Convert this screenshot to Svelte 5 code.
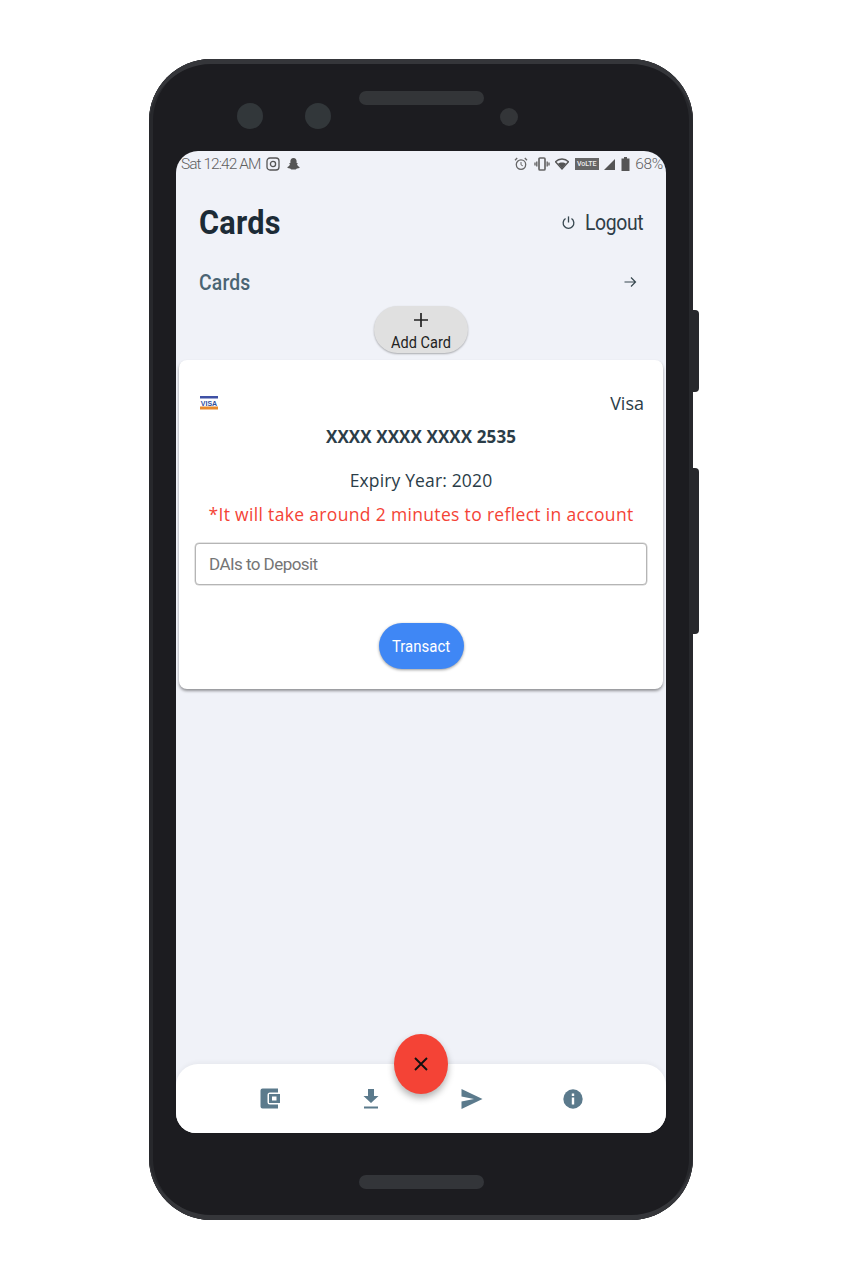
<script>
  const navItems = ['wallet', 'download', 'send', 'info'];
</script>

<div class="page">
  <div class="phone">
    <div class="rocker"></div>
    <div class="power"></div>
    <div class="bezel-top">
      <span class="cam cam-a"></span>
      <span class="cam cam-b"></span>
      <span class="speaker"></span>
      <span class="sensor"></span>
    </div>

    <div class="screen">
      <div class="status">
        <div class="status-left">
          <span>Sat 12:42 AM</span>
          <svg width="14" height="14" viewBox="0 0 14 14"><rect x="1" y="1" width="12" height="12" rx="3" fill="none" stroke="#555" stroke-width="1.300"/><circle cx="7" cy="7" r="2.600" fill="none" stroke="#555" stroke-width="1.300"/></svg>
          <svg width="15" height="14" viewBox="0 0 15 14"><path d="M7.500 1C5.400 1 4.400 2.600 4.400 4.300V6L3 6.600l1 .8C3.600 8.600 2.600 9.600 1 10.200l1.500 1 1.600.2 1.200 1.100h4.400l1.200-1.100 1.600-.2 1.500-1c-1.600-.6-2.600-1.600-3-2.800l1-.8L10.600 6V4.300C10.600 2.600 9.600 1 7.500 1z" fill="#555"/></svg>
        </div>
        <div class="status-right">
          <svg width="14" height="14" viewBox="0 0 14 14"><circle cx="7" cy="7.600" r="4.700" fill="none" stroke="#666" stroke-width="1.300"/><path d="M7 5v2.800l1.800 1" fill="none" stroke="#666"/><path d="M1 3.200 3.200 1M13 3.200 10.800 1" stroke="#666" stroke-width="1.300"/></svg>
          <svg width="16" height="14" viewBox="0 0 16 14"><rect x="5" y="1" width="6" height="12" rx="1" fill="none" stroke="#666" stroke-width="1.700"/><path d="M2.800 4.500v5M1 5.500v3M13.200 4.500v5M15 5.500v3" stroke="#666" stroke-width="1.400"/></svg>
          <svg width="14" height="12" viewBox="0 0 14 12"><path d="M7 11 .5 3.800C2.200 2 4.500 1 7 1s4.800 1 6.500 2.800z" fill="none" stroke="#555" stroke-width="1.300"/><path d="M7 10.500 3 5.800C4 5 5.400 4.500 7 4.500s3 .5 4 1.300z" fill="#555"/></svg>
          <span class="volte">VoLTE</span>
          <svg width="11" height="11" viewBox="0 0 12 12"><path d="M0 12 12 0v12z" fill="#555"/></svg>
          <svg width="9" height="14" viewBox="0 0 9 14"><path d="M3 0h3v1.500h2.500V14H.5V1.500H3z" fill="#555"/></svg>
          <span>68%</span>
        </div>
      </div>

      <header class="app-header">
        <h1>Cards</h1>
        <button class="logout">
          <svg width="15" height="15" viewBox="0 0 16 16"><path d="M8 1.500v6.500" stroke="#37474f" stroke-width="1.400" fill="none"/><path d="M4.800 3.800a5.700 5.700 0 1 0 6.400 0" stroke="#37474f" stroke-width="1.400" fill="none"/></svg>
          <span class="narrow-right">Logout</span>
        </button>
      </header>

      <div class="section-row">
        <span class="section-title">Cards</span>
        <svg width="14" height="14" viewBox="0 0 14 14"><path d="M1.500 7h11M8 2.500 12.500 7 8 11.500" fill="none" stroke="#37474f" stroke-width="1.200"/></svg>
      </div>

      <div class="add-row">
        <button class="add-card">
          <svg width="16" height="16" viewBox="0 0 16 16"><path d="M8 1v14M1 8h14" stroke="#222" stroke-width="1.700"/></svg>
          <span class="narrow">Add Card</span>
        </button>
      </div>

      <section class="card">
        <div class="card-top">
          <svg class="visa" width="18" height="14" viewBox="0 0 18 14">
            <rect y="0" width="18" height="2.500" fill="#3f51a5"/>
            <text x="9" y="9.800" text-anchor="middle" font-size="7" font-weight="700" font-family="Liberation Sans, sans-serif" fill="#2f4f9f">VISA</text>
            <rect y="10.500" width="18" height="3" fill="#e88a2c"/>
          </svg>
          <span class="brand">Visa</span>
        </div>
        <div class="number">XXXX XXXX XXXX 2535</div>
        <div class="expiry">Expiry Year: 2020</div>
        <div class="notice">*It will take around 2 minutes to reflect in account</div>
        <input class="amount" placeholder="DAIs to Deposit" />
        <button class="transact"><span class="narrow">Transact</span></button>
      </section>

      <nav class="bottom-nav">
        {#each navItems as item}
          <span class="nav-item">
            {#if item === 'wallet'}
              <svg width="20" height="21" viewBox="0 0 20 21"><path d="M2.500 .5h15.500v4H10a2.500 2.500 0 0 0-2.500 2.500v7a2.500 2.500 0 0 0 2.500 2.500h8v4H2.500A2 2 0 0 1 .5 18.500V2.500a2 2 0 0 1 2-2z" fill="#5b7a8c"/><path d="M9 6h11v9H9zM12 8.500v4h4.500V8.500z" fill="#5b7a8c" fill-rule="evenodd"/></svg>
            {:else if item === 'download'}
              <svg width="18" height="22" viewBox="0 0 18 22"><path d="M6 1h6v7h4.500L9 15 1.500 8H6zM2 18.500h14V20.500H2z" fill="#5b7a8c"/></svg>
            {:else if item === 'send'}
              <svg width="22" height="20" viewBox="0 0 22 20"><path d="M.5 0 21.500 10 .5 20v-7.500L13 10 .5 7.500z" fill="#5b7a8c"/></svg>
            {:else}
              <svg width="20" height="22" viewBox="0 0 20 22"><circle cx="10" cy="11" r="9.700" fill="#5b7a8c"/><path d="M8.800 9.500h2.400v7H8.800zM8.800 5.500h2.400v2.400H8.800z" fill="#fff"/></svg>
            {/if}
          </span>
        {/each}
        <button class="fab" aria-label="Close">
          <svg width="16" height="16" viewBox="0 0 16 16"><path d="M2 2l12 12M14 2 2 14" stroke="#111" stroke-width="1.900"/></svg>
        </button>
      </nav>
    </div>

    <div class="bezel-bottom"><span class="home"></span></div>
  </div>
</div>

<style>
  :global(body) {
    margin: 0;
    background: #fff;
    font-family: Roboto, "Liberation Sans", sans-serif;
  }

  .page {
    height: 1280px;
    padding: 59px 0 0 149px;
    box-sizing: border-box;
  }

  .phone {
    position: relative;
    width: 544px;
    height: 1161px;
    background: #1c1c20;
    border-radius: 62px;
    box-shadow: inset 0 5px 0 #35363a, inset 0 -5px 0 #35363a, inset 0 0 0 4px #27282c;
    display: flex;
    flex-direction: column;
    align-items: center;
  }

  .rocker, .power {
    position: absolute;
    right: -6px;
    width: 6px;
    background: #27282c;
    border-radius: 0 4px 4px 0;
  }
  .rocker { top: 251px; height: 82px; }
  .power { top: 409px; height: 166px; }

  .bezel-top {
    position: relative;
    height: 92px;
    width: 100%;
    flex-shrink: 0;
  }

  .bezel-top span { position: absolute; background: #333538; }
  .cam { width: 26px; height: 26px; border-radius: 50%; top: 44px; background: #32373a !important; }
  .cam-a { left: 88px; }
  .cam-b { left: 156px; }
  .speaker { left: 210px; top: 32px; width: 125px; height: 14px; border-radius: 7px; }
  .sensor { left: 351px; top: 49px; width: 18px; height: 18px; border-radius: 50%; }

  .screen {
    width: 490px;
    height: 982px;
    flex-shrink: 0;
    background: #f0f2f8;
    border-radius: 22px 22px 20px 20px;
    display: flex;
    flex-direction: column;
    position: relative;
  }

  .status {
    height: 26px;
    display: flex;
    justify-content: space-between;
    align-items: center;
    padding: 0 3px 0 5px;
    font-size: 15.500px;
    font-weight: 300;
    letter-spacing: -0.950px;
    color: #5f5f5f;
    flex-shrink: 0;
  }
  .status-left, .status-right { display: flex; align-items: center; gap: 6px; }
  .status-right { gap: 5.500px; letter-spacing: -0.300px; }
  .volte {
    background: #666;
    color: #eee;
    font-size: 7px;
    font-weight: 500;
    letter-spacing: 0;
    width: 24px;
    height: 12px;
    line-height: 12px;
    text-align: center;
    overflow: hidden;
  }

  .app-header {
    display: flex;
    justify-content: space-between;
    align-items: center;
    padding: 0 23px;
    margin-top: 23px;
    height: 44px;
    flex-shrink: 0;
  }

  h1 {
    margin: 0;
    font-size: 33px;
    font-weight: 700;
    letter-spacing: 0.300px;
    color: #1c2b36;
    transform: scaleX(0.93);
    transform-origin: left center;
  }

  .narrow {
    display: inline-block;
    transform: scaleX(0.88);
  }
  .narrow-right {
    display: inline-block;
    transform: scaleX(0.88);
    transform-origin: right center;
  }

  .logout {
    display: flex;
    align-items: center;
    gap: 1px;
    border: 0;
    padding: 0;
    background: none;
    font: 400 22px Roboto, sans-serif;
    letter-spacing: -0.400px;
    color: #2f3e48;
  }

  .section-row {
    display: flex;
    justify-content: space-between;
    align-items: center;
    padding: 0 29px 0 23px;
    margin-top: 24px;
    height: 28px;
    flex-shrink: 0;
  }

  .section-title {
    font-size: 21.500px;
    font-weight: 500;
    letter-spacing: 0.200px;
    color: #4a6473;
    transform: scaleX(0.9);
    transform-origin: left center;
  }

  .add-row {
    display: flex;
    justify-content: center;
    margin-top: 10px;
    flex-shrink: 0;
    height: 47px;
  }

  .add-card {
    width: 94px;
    height: 47px;
    border: 0;
    border-radius: 24px;
    background: #e0e0e0;
    box-shadow: 0 1px 2px rgba(0, 0, 0, 0.3);
    display: flex;
    flex-direction: column;
    align-items: center;
    justify-content: flex-end;
    gap: 5px;
    padding: 0 0 1px;
    font: 400 16.500px Roboto, sans-serif;
    color: #222;
    white-space: nowrap;
  }

  .card {
    margin: 7px 3px 0;
    height: 329px;
    box-sizing: border-box;
    background: #fff;
    border-radius: 8px;
    box-shadow: 0 2px 3px rgba(0, 0, 0, 0.4);
    display: flex;
    flex-direction: column;
    align-items: center;
    padding: 32px 16px 0;
    flex-shrink: 0;
    color: #2b3d48;
    font-family: "Open Sans", sans-serif;
  }

  .card-top {
    width: 100%;
    display: flex;
    justify-content: space-between;
    align-items: center;
    padding: 0 3px 0 5px;
    box-sizing: border-box;
    height: 22px;
  }
  .brand { font-size: 18px; }

  .number {
    font-weight: 700;
    margin-top: 10px;
    height: 26px;
    line-height: 26px;
    font-size: 17px;
    letter-spacing: 0.100px;
  }

  .expiry { font-size: 17.500px; letter-spacing: 0.150px; margin-top: 17px; line-height: 26px; }

  .notice {
    margin-top: 8px;
    font-size: 17.500px;
    letter-spacing: 0.330px;
    line-height: 26px;
    color: #f44336;
    white-space: nowrap;
  }

  .amount {
    width: 100%;
    height: 42px;
    box-sizing: border-box;
    margin-top: 16px;
    border: 1px solid #b5b5b5;
    border-radius: 4px;
    box-shadow: 0 0 0 0.500px #ccc;
    padding: 0 13px;
    font: 400 17px Roboto, sans-serif;
    letter-spacing: -0.550px;
    color: #666;
  }
  .amount::placeholder { color: #757575; opacity: 1; }

  .transact {
    margin-top: 38px;
    width: 85px;
    height: 46px;
    border: 0;
    border-radius: 23px;
    background: #3f87f5;
    box-shadow: 0 1px 3px rgba(0, 0, 0, 0.4);
    color: #fff;
    font: 400 17px Roboto, sans-serif;
    padding: 0;
    white-space: nowrap;
  }

  .bottom-nav {
    margin-top: auto;
    height: 69px;
    background: #fff;
    border-radius: 22px 22px 20px 20px;
    position: relative;
    display: grid;
    grid-template-columns: repeat(4, 101px);
    justify-content: center;
    align-items: center;
    flex-shrink: 0;
    box-shadow: 0 -2px 4px rgba(0, 0, 0, 0.04);
  }

  .nav-item {
    display: flex;
    justify-content: center;
    align-items: center;
  }

  .fab {
    position: absolute;
    left: 218px;
    top: -30px;
    width: 54px;
    height: 60px;
    border: 0;
    padding: 0;
    border-radius: 50%;
    background: #f44336;
    box-shadow: 0 4px 7px rgba(0, 0, 0, 0.3);
    display: flex;
    align-items: center;
    justify-content: center;
  }

  .bezel-bottom {
    flex: 1;
    width: 100%;
    display: flex;
    justify-content: center;
    padding-top: 42px;
    box-sizing: border-box;
  }

  .home {
    width: 125px;
    height: 14px;
    border-radius: 7px;
    background: #333539;
  }
</style>
